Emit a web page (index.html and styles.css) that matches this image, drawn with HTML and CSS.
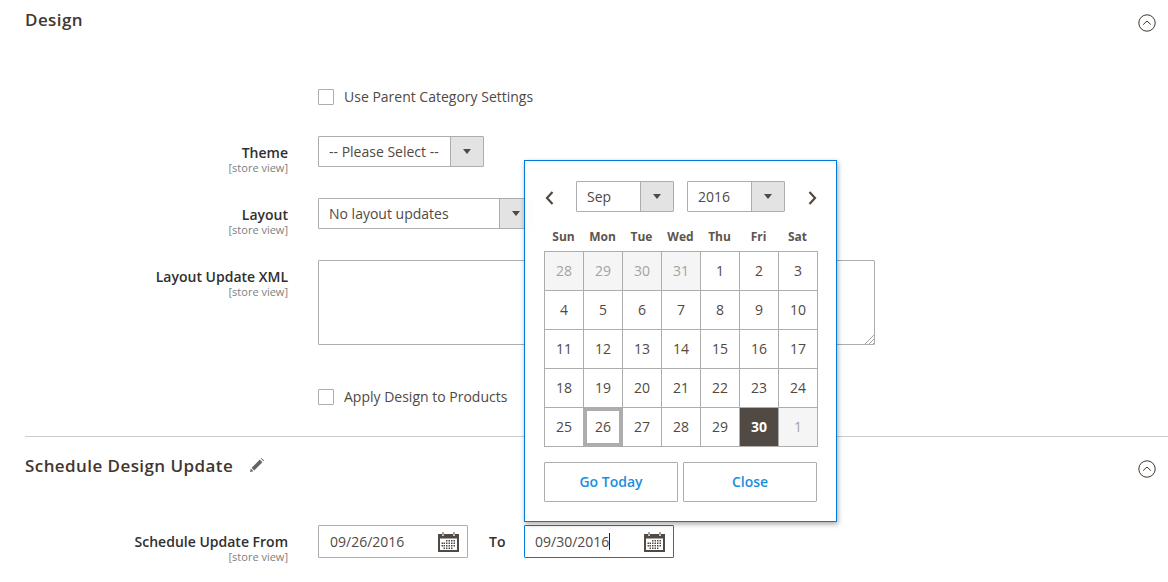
FILE: index.html
```html
<!DOCTYPE html>
<html lang="en">
<head>
  <meta charset="UTF-8" />
  <title>Category Design</title>
  <link rel="stylesheet" href="styles.css">
</head>
<body>

  <div id="page">
    <!-- Design -->
    <div class="section-head design-head">
      <h2>Design</h2>
      <svg class="toggle" viewBox="0 0 18 18"><circle cx="9" cy="9" r="8.2"/><path d="M5.2 10.6 9 7l3.8 3.6"/></svg>
    </div>

    <div class="row check-row first-check">
      <div class="label-col"></div>
      <span class="checkbox"></span>
      <span class="check-text">Use Parent Category Settings</span>
    </div>

    <div class="row theme-row">
      <div class="label-col">
        <div class="label">Theme</div>
        <div class="scope">[store view]</div>
      </div>
      <div class="select theme-select">
        <span class="select-value">-- Please Select --</span>
        <span class="select-arrow"><i></i></span>
      </div>
    </div>

    <div class="row layout-row">
      <div class="label-col">
        <div class="label">Layout</div>
        <div class="scope">[store view]</div>
      </div>
      <div class="select layout-select">
        <span class="select-value">No layout updates</span>
        <span class="select-arrow"><i></i></span>
      </div>
    </div>

    <div class="row xml-row">
      <div class="label-col">
        <div class="label">Layout Update XML</div>
        <div class="scope">[store view]</div>
      </div>
      <div class="textarea">
        <svg class="grip" viewBox="0 0 9 9"><path d="M0 9 9 0M4 9l5-5M8 9l1-1"/></svg>
      </div>
    </div>

    <div class="row check-row second-check">
      <div class="label-col"></div>
      <span class="checkbox"></span>
      <span class="check-text">Apply Design to Products</span>
    </div>

    <div class="divider"></div>

    <!-- Schedule -->
    <div class="section-head schedule-head">
      <h2>Schedule Design Update</h2>
      <svg class="pencil" viewBox="0 0 14 14"><path d="M0 14l.8-3.400 2.600 2.600z"/><path d="M1.600 9.800 9.800 1.600l2.600 2.600-8.200 8.200z"/><path d="M10.800.6l.6-.6 2.600 2.600-.6.6z"/></svg>
      <svg class="toggle" viewBox="0 0 18 18"><circle cx="9" cy="9" r="8.2"/><path d="M5.2 10.6 9 7l3.8 3.6"/></svg>
    </div>

    <div class="row date-row">
      <div class="label-col">
        <div class="label">Schedule Update From</div>
        <div class="scope">[store view]</div>
      </div>
      <div class="date-input">
        <span>09/26/2016</span>
        <svg class="cal-icon" viewBox="0 0 21 20"><use href="#cal"/></svg>
      </div>
      <span class="to-label">To</span>
      <div class="date-input active">
        <span class="typed">09/30/2016</span>
        <svg class="cal-icon" viewBox="0 0 21 20"><use href="#cal"/></svg>
      </div>
    </div>
  </div>

  <!-- Datepicker -->
  <div class="datepicker">
    <div class="dp-nav">
      <svg class="dp-arrow" viewBox="0 0 9 14"><path d="M7.500 1 2 7l5.500 6"/></svg>
      <div class="select dp-month">
        <span class="select-value">Sep</span>
        <span class="select-arrow"><i></i></span>
      </div>
      <div class="select dp-year">
        <span class="select-value">2016</span>
        <span class="select-arrow"><i></i></span>
      </div>
      <svg class="dp-arrow dp-next" viewBox="0 0 9 14"><path d="M1.500 1 7 7l-5.500 6"/></svg>
    </div>

    <div class="dp-week">
      <span>Sun</span><span>Mon</span><span>Tue</span><span>Wed</span><span>Thu</span><span>Fri</span><span>Sat</span>
    </div>

    <div class="dp-days">
      <span class="other">28</span><span class="other">29</span><span class="other">30</span><span class="other">31</span><span>1</span><span>2</span><span>3</span>
      <span>4</span><span>5</span><span>6</span><span>7</span><span>8</span><span>9</span><span>10</span>
      <span>11</span><span>12</span><span>13</span><span>14</span><span>15</span><span>16</span><span>17</span>
      <span>18</span><span>19</span><span>20</span><span>21</span><span>22</span><span>23</span><span>24</span>
      <span>25</span><span class="today">26</span><span>27</span><span>28</span><span>29</span><span class="picked">30</span><span class="other">1</span>
    </div>

    <div class="dp-buttons">
      <button class="dp-btn go-today">Go Today</button>
      <button class="dp-btn dp-close">Close</button>
    </div>
  </div>

  <svg width="0" height="0" class="sprite">
    <symbol id="cal" viewBox="0 0 21 20">
      <path fill="#514943" d="M0 2h4v2h2V2h9v2h2V2h4v18H0z"/>
      <path fill="#514943" d="M4.500 0h1v3.500h-1zM15.500 0h1v3.500h-1z"/>
      <path fill="#fff" d="M2 6.500h17v11.500H2z"/>
      <path fill="#514943" d="M8 8h1.500v1.500H8zM10.500 8H12v1.500h-1.500zM13 8h1.500v1.500H13zM15.500 8H17v1.500h-1.500zM3.500 10.500H5V12H3.500zM5.500 10.500H7V12H5.500zM8 10.500h1.500V12H8zM10.500 10.500H12V12h-1.500zM13 10.500h1.500V12H13zM15.500 10.500H17V12h-1.500zM3.500 13H5v1.500H3.500zM5.500 13H7v1.500H5.500zM8 13h1.500v1.500H8zM10.500 13H12v1.500h-1.500zM13 13h1.500v1.500H13zM15.500 13H17v1.500h-1.500zM5.500 15.500H7V17H5.500zM8 15.500h1.500V17H8zM10.500 15.500H12V17h-1.500zM13 15.500h1.500V17H13z"/>
    </symbol>
  </svg>

</body>
</html>
```

FILE: styles.css
```css
* {
  box-sizing: border-box;
}
html, body {
  margin: 0;
  padding: 0;
  height: 582px;
  overflow: hidden;
  background: #fff;
  font-family: 'Open Sans', sans-serif;
  font-size: 14px;
  color: #41362f;
}

#page {
  padding-left: 25px;
}

/* Section titles */
.section-head {
  display: flex;
  align-items: center;
  height: 24px;
}
.section-head h2 {
  margin: 0;
  font-size: 17px;
  font-weight: 600;
  letter-spacing: 0.425px;
  color: #41362f;
}
.design-head {
  margin-top: 7px;
}
.schedule-head {
  margin-top: 16px;
}
.toggle {
  width: 18px;
  height: 18px;
  margin-left: auto;
  margin-right: 12px;
  margin-top: 7px;
  fill: none;
  stroke: #41362f;
  stroke-width: 1;
}
.schedule-head .toggle {
  margin-top: 8px;
}
.pencil {
  width: 14px;
  height: 14px;
  margin-left: 17px;
  fill: #6b625b;
}

/* Form rows */
.row {
  display: flex;
  align-items: flex-start;
}
.label-col {
  width: 263px;
  margin-right: 30px;
  flex-shrink: 0;
  text-align: right;
}
.label {
  font-weight: 600;
  line-height: 19px;
  color: #303030;
  margin-top: 7px;
}
.scope {
  font-size: 11px;
  line-height: 12px;
  color: #808080;
}

.check-row {
  align-items: center;
  height: 17px;
}
.first-check {
  margin-top: 57px;
}
.second-check {
  margin-top: 43px;
}
.checkbox {
  width: 16px;
  height: 16px;
  border: 1px solid #adadad;
  border-radius: 1px;
  background: #fff;
}
.check-text {
  margin-left: 10px;
  color: #514943;
}

.theme-row {
  margin-top: 31px;
}
.layout-row {
  margin-top: 24px;
}
.xml-row {
  margin-top: 24px;
}

/* Select */
.select {
  display: flex;
  height: 31px;
  border: 1px solid #adadad;
  border-radius: 1px;
  background: #fff;
}
.select-value {
  flex: 1;
  padding-left: 10px;
  line-height: 29px;
  color: #514943;
  white-space: nowrap;
}
.select-arrow {
  width: 33px;
  flex-shrink: 0;
  display: flex;
  align-items: center;
  justify-content: center;
  background: #e3e3e3;
  border-left: 1px solid #adadad;
}
.select-arrow i {
  width: 0;
  height: 0;
  border-left: 4px solid transparent;
  border-right: 4px solid transparent;
  border-top: 5px solid #514943;
}
.theme-select {
  width: 166px;
}
.layout-select {
  width: 215px;
}

.textarea {
  position: relative;
  width: 557px;
  height: 85px;
  border: 1px solid #adadad;
  border-radius: 1px;
  background: #fff;
}
.grip {
  position: absolute;
  right: 0;
  bottom: 0;
  width: 9px;
  height: 9px;
  fill: none;
  stroke: #777;
  stroke-width: 1;
  stroke-dasharray: 1 0.5;
}

.divider {
  height: 1px;
  margin-top: 31px;
  background: #cccccc;
}

/* Date fields */
.date-row {
  margin-top: 48px;
}
.date-input {
  display: flex;
  align-items: center;
  justify-content: space-between;
  width: 150px;
  height: 33px;
  padding: 0 8px 0 11px;
  border: 1px solid #adadad;
  border-radius: 1px;
  color: #514943;
  background: #fff;
}
.date-input.active {
  border-color: #007bdb;
  padding-left: 10px;
}
.typed {
  border-right: 1px solid #222;
  line-height: 17px;
}
.cal-icon {
  width: 21px;
  height: 20px;
}
.to-label {
  width: 56px;
  line-height: 33px;
  padding-left: 21px;
  font-weight: 600;
  color: #303030;
}
.sprite {
  position: absolute;
}

/* Datepicker popup */
.datepicker {
  position: absolute;
  left: 524px;
  top: 160px;
  width: 313px;
  height: 362px;
  padding: 20px 19px 0;
  background: rgba(255, 255, 255, 0.97);
  border: 1px solid #007bdb;
  box-shadow: 1px 2px 5px rgba(0, 0, 0, 0.35);
}
.dp-nav {
  display: flex;
  align-items: center;
  height: 31px;
}
.dp-arrow {
  width: 9px;
  height: 14px;
  margin-left: 1px;
  margin-top: 3px;
  fill: none;
  stroke: #514943;
  stroke-width: 2.2;
}
.dp-next {
  margin-left: 23px;
}
.dp-month, .dp-year {
  width: 98px;
}
.dp-month {
  margin-left: 22px;
}
.dp-year {
  margin-left: 13px;
}
.dp-nav .select-arrow {
  width: 33px;
}

.dp-week {
  display: grid;
  grid-template-columns: repeat(7, 39px);
  margin-top: 16px;
  font-size: 12px;
  font-weight: 700;
  line-height: 17px;
  color: #5e554f;
  text-align: center;
}

.dp-days {
  display: grid;
  grid-template-columns: repeat(7, 39px);
  grid-auto-rows: 39px;
  width: 274px;
  margin-top: 6px;
  border-top: 1px solid #adadad;
  border-left: 1px solid #adadad;
}
.dp-days span {
  display: flex;
  align-items: center;
  justify-content: center;
  padding-bottom: 2px;
  border-right: 1px solid #adadad;
  border-bottom: 1px solid #adadad;
  background: #fff;
  font-weight: 500;
  color: #514943;
}
.dp-days .other {
  background: #f5f5f5;
  color: #a3a3a3;
}
.dp-days .today {
  margin: -1px 0 0 -1px;
  border: 4px solid #adadad;
}
.dp-days .picked {
  background: #514943;
  color: #fff;
  font-weight: 700;
}

.dp-buttons {
  display: flex;
  gap: 5px;
  margin-top: 15px;
}
.dp-btn {
  width: 134px;
  height: 40px;
  padding: 0 0 2px;
  border: 1px solid #adadad;
  border-radius: 1px;
  background: #fff;
  font-family: 'Open Sans', sans-serif;
  font-size: 14px;
  font-weight: 600;
  color: #1a8ee1;
}
```
